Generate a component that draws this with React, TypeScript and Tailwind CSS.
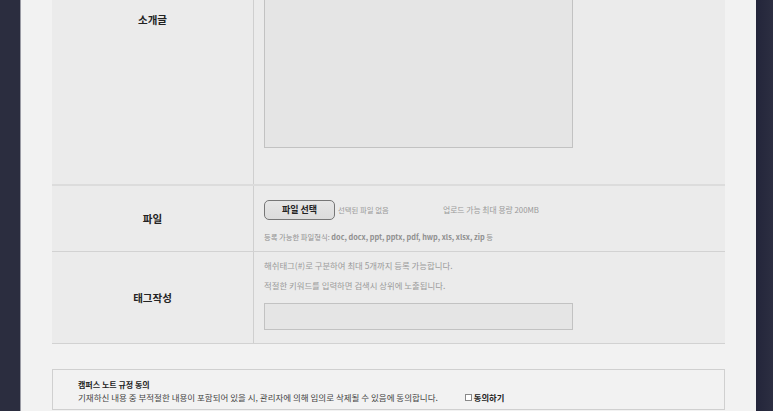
import React from "react";

const font = { fontFamily: '"Noto Sans CJK KR", "Noto Sans", sans-serif' };

export default function App() {
  return (
    <div className="w-[773px] h-[411px] overflow-hidden flex bg-[#f2f2f2]" style={font}>
      <div className="w-[20px] shrink-0 bg-[#2b2d3f]" />
      <div className="w-px shrink-0 bg-[#9a9ba4]" />
      <div className="w-[735px] shrink-0 bg-[#f2f2f2] px-[31px]">
        <div className="-mt-[30px] bg-[#ebebeb] border-b border-[#d2d2d2]">
          {/* Row 1 */}
          <div className="flex border-b-2 border-[#dcdcdc]">
            <div className="w-[201px] shrink-0 flex justify-center pt-[43px] text-[10.5px] leading-[14px] font-bold text-[#222]">
              소개글
            </div>
            <div className="w-px shrink-0 bg-[#cfcfcf]" />
            <div className="flex-1 pl-[10px] pt-[20px] pb-[36px]">
              <div className="w-[309px] h-[158px] bg-[#e5e5e5] border-[1.5px] border-[#c2c2c2]" />
            </div>
          </div>
          {/* Row 2 */}
          <div className="flex border-b border-[#d2d2d2]">
            <div className="w-[201px] shrink-0 flex items-center justify-center text-[10.5px] font-bold text-[#222]">
              파일
            </div>
            <div className="w-px shrink-0 bg-[#cfcfcf]" />
            <div className="flex-1 pl-[10px] pt-[14px] pb-[8px]">
              <div className="flex items-center h-[20px]">
                <div className="w-[71px] h-[20px] rounded-[5px] border border-[#767676] bg-gradient-to-b from-[#e6e6e6] to-[#dcdcdc] flex items-center justify-center text-[9px] font-bold text-[#222]">
                  파일 선택
                </div>
                <span className="ml-[3px] w-[105px] text-[7.4px] text-[#9a9a9a]">선택된 파일 없음</span>
                <span className="text-[7.8px] text-[#9a9a9a]">업로드 가능 최대 용량 200MB</span>
              </div>
              <div className="mt-[11px] h-[12px] leading-[12px] text-[7.3px] text-[#8f8f8f]">
                등록 가능한 파일형식: <span className="font-bold">doc, docx, ppt, pptx, pdf, hwp, xls, xlsx, zip</span> 등
              </div>
            </div>
          </div>
          {/* Row 3 */}
          <div className="flex">
            <div className="w-[201px] shrink-0 flex items-center justify-center text-[10.5px] font-bold text-[#222]">
              태그작성
            </div>
            <div className="w-px shrink-0 bg-[#cfcfcf]" />
            <div className="flex-1 pl-[10px] pt-[3px] pb-[13px]">
              <div className="h-[20px] leading-[20px] text-[8.4px] text-[#9a9a9a]">
                해쉬태그(#)로 구분하여 최대 5개까지 등록 가능합니다.
              </div>
              <div className="h-[20px] leading-[20px] text-[8.4px] text-[#9a9a9a]">
                적절한 키워드를 입력하면 검색시 상위에 노출됩니다.
              </div>
              <div className="mt-[8px] w-[309px] h-[27px] bg-[#e5e5e5] border-[1.5px] border-[#c2c2c2]" />
            </div>
          </div>
        </div>
        <div className="mt-[25px] border border-[#d0d0d0] bg-[#f2f2f2] pl-[25px] pt-[9px] pb-[6px]">
          <div className="h-[12px] leading-[12px] text-[8px] font-bold text-[#222]">캠퍼스 노트 규정 동의</div>
          <div className="flex items-center h-[12px] leading-[12px]">
            <span className="text-[8.5px] text-[#444]">
              기재하신 내용 중 부적절한 내용이 포함되어 있을 시, 관리자에 의해 임의로 삭제될 수 있음에 동의합니다.
            </span>
            <span className="ml-[27px] w-[7px] h-[7px] border border-[#888] bg-white" />
            <span className="ml-[2px] text-[8.3px] font-bold text-[#222]">동의하기</span>
          </div>
        </div>
      </div>
      <div className="flex-1 bg-gradient-to-r from-[#23253a] to-[#2c2e41]" />
    </div>
  );
}
